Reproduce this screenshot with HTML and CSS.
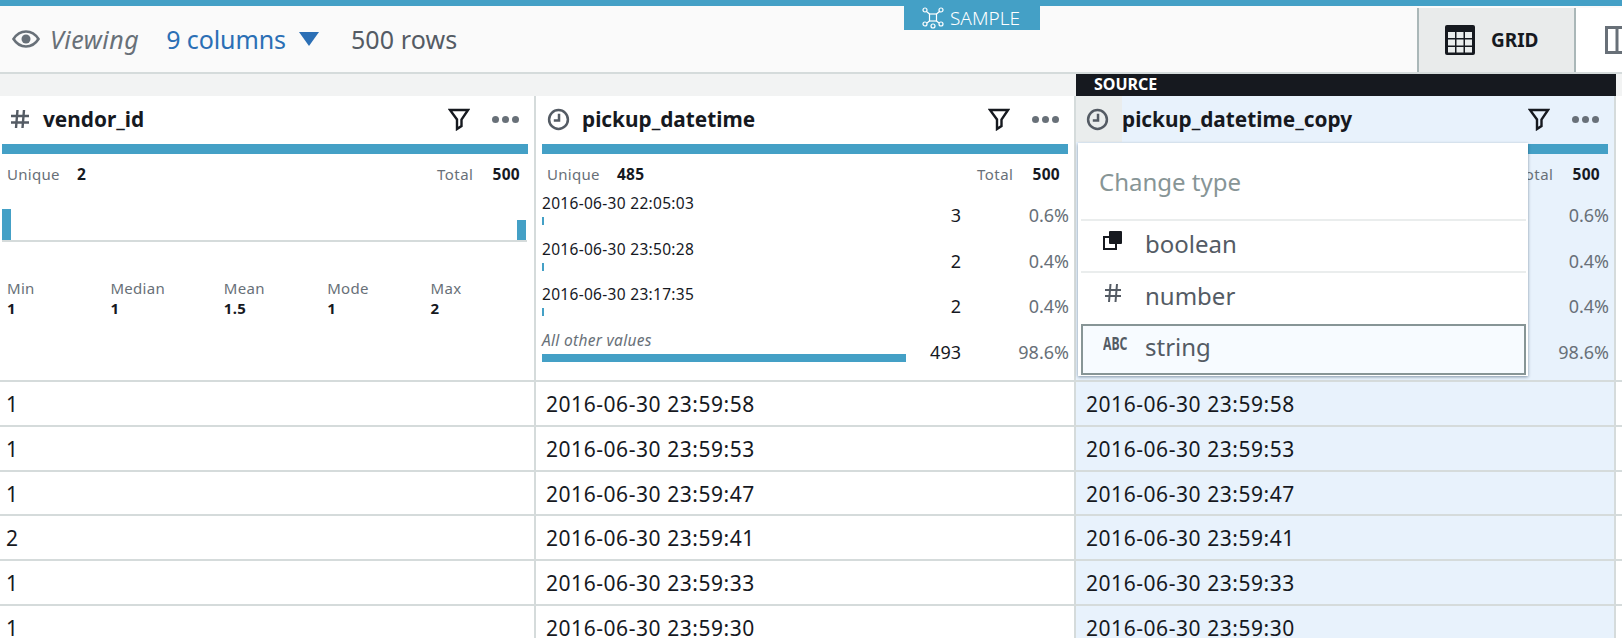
FILE: index.html
```html
<!DOCTYPE html>
<html lang="en">
<head>
    <meta charset="UTF-8">
    <meta name="viewport" content="width=device-width, initial-scale=1.0">
    <title>Data grid</title>
    <link rel="stylesheet" href="styles.css">
</head>
<body>
    <div class="topline"></div>
    <div class="toolbar">
        <svg class="eye" viewBox="0 0 28 18" width="28" height="18"><path d="M1.500 9C5 3.500 9 1.500 14 1.500S23 3.500 26.500 9C23 14.500 19 16.500 14 16.500S5 14.500 1.500 9Z" fill="none" stroke="#687078" stroke-width="2.600"/><circle cx="14" cy="9" r="4.500" fill="#687078"/></svg>
        <span class="viewing">Viewing</span>
        <span class="columns">9 columns</span>
        <span class="caret"></span>
        <span class="rows">500 rows</span>
        <div class="sample">
            <svg viewBox="0 0 22 22" width="22" height="22" fill="none" stroke="#fff" stroke-width="1.200"><rect x="7.500" y="7" width="7" height="7"/><circle cx="3" cy="3" r="2"/><circle cx="19" cy="3" r="2"/><circle cx="3" cy="17" r="2"/><circle cx="19" cy="17" r="2"/><circle cx="11" cy="19" r="2"/><path d="M4.500 4.500L7.500 7M17.500 4.500L14.500 7M5 16L7.500 14M17 16L14.500 14"/></svg>
            <span>SAMPLE</span>
        </div>
        <div class="view-btn active">
            <svg viewBox="0 0 32 32" width="32" height="32"><rect x="1" y="1" width="30" height="30" rx="2" fill="#16191f"/><g fill="#eaeded"><rect x="4" y="8" width="7" height="6"/><rect x="12.500" y="8" width="7" height="6"/><rect x="21" y="8" width="7" height="6"/><rect x="4" y="15.500" width="7" height="6"/><rect x="12.500" y="15.500" width="7" height="6"/><rect x="21" y="15.500" width="7" height="6"/><rect x="4" y="23" width="7" height="5.500"/><rect x="12.500" y="23" width="7" height="5.500"/><rect x="21" y="23" width="7" height="5.500"/></g></svg>
            <span>GRID</span>
        </div>
        <div class="view-btn split">
            <svg viewBox="0 0 32 28" width="32" height="28" fill="none" stroke="#687078" stroke-width="3"><rect x="1.500" y="1.500" width="29" height="25"/><path d="M12 1.500V26.500"/></svg>
        </div>
    </div>

    <div class="row strip">
        <div></div>
        <div></div>
        <div class="source">SOURCE</div>
    </div>

    <div class="row head">
        <div class="col">
            <div class="col-title">
                <svg class="hash" viewBox="0 0 18 18" width="18" height="18" fill="none" stroke="#545b64" stroke-width="2.400"><path d="M6.500 0L5 18M13 0L11.500 18M0 6H18M0 12.500H18"/></svg>
                <span class="col-name">vendor_id</span>
                <svg class="filter" viewBox="0 0 22 24" width="22" height="24"><path d="M2 3H20L13.500 12.500V19L9 22V12.500Z" fill="none" stroke="#16191f" stroke-width="2.400" stroke-linejoin="miter"/></svg>
                <span class="dots"><i></i><i></i><i></i></span>
            </div>
            <div class="col-bar"></div>
            <div class="totals"><span>Unique</span><b>2</b><span class="push">Total</span><b>500</b></div>
            <div class="histogram"><i class="tall"></i><i class="short"></i></div>
            <div class="summary">
                <div><span>Min</span><b>1</b></div>
                <div><span>Median</span><b>1</b></div>
                <div><span>Mean</span><b>1.5</b></div>
                <div><span>Mode</span><b>1</b></div>
                <div><span>Max</span><b>2</b></div>
            </div>
        </div>

        <div class="col">
            <div class="col-title">
                <svg class="clock" viewBox="0 0 22 22" width="23" height="23"><circle cx="11" cy="11" r="9" fill="none" stroke="#545b64" stroke-width="2.400"/><path d="M11.500 5.500V12H6.500" fill="none" stroke="#545b64" stroke-width="2.400"/></svg>
                <span class="col-name">pickup_datetime</span>
                <svg class="filter" viewBox="0 0 22 24" width="22" height="24"><path d="M2 3H20L13.500 12.500V19L9 22V12.500Z" fill="none" stroke="#16191f" stroke-width="2.400"/></svg>
                <span class="dots"><i></i><i></i><i></i></span>
            </div>
            <div class="col-bar"></div>
            <div class="totals"><span>Unique</span><b>485</b><span class="push">Total</span><b>500</b></div>
            <div class="values">
                <div class="value"><div class="value-main"><span>2016-06-30 22:05:03</span><i class="mini"></i></div><span class="count">3</span><span class="pct">0.6%</span></div>
                <div class="value"><div class="value-main"><span>2016-06-30 23:50:28</span><i class="mini"></i></div><span class="count">2</span><span class="pct">0.4%</span></div>
                <div class="value"><div class="value-main"><span>2016-06-30 23:17:35</span><i class="mini"></i></div><span class="count">2</span><span class="pct">0.4%</span></div>
                <div class="value"><div class="value-main"><em>All other values</em><i class="full"></i></div><span class="count">493</span><span class="pct">98.6%</span></div>
            </div>
        </div>

        <div class="col selected">
            <div class="col-title">
                <span class="clock-box"><svg class="clock" viewBox="0 0 22 22" width="23" height="23"><circle cx="11" cy="11" r="9" fill="none" stroke="#545b64" stroke-width="2.400"/><path d="M11.500 5.500V12H6.500" fill="none" stroke="#545b64" stroke-width="2.400"/></svg></span>
                <span class="col-name">pickup_datetime_copy</span>
                <svg class="filter" viewBox="0 0 22 24" width="22" height="24"><path d="M2 3H20L13.500 12.500V19L9 22V12.500Z" fill="none" stroke="#16191f" stroke-width="2.400"/></svg>
                <span class="dots"><i></i><i></i><i></i></span>
            </div>
            <div class="col-bar"></div>
            <div class="totals"><span class="push">Total</span><b>500</b></div>
            <div class="values">
                <div class="value"><div class="value-main"></div><span class="count"></span><span class="pct">0.6%</span></div>
                <div class="value"><div class="value-main"></div><span class="count"></span><span class="pct">0.4%</span></div>
                <div class="value"><div class="value-main"></div><span class="count"></span><span class="pct">0.4%</span></div>
                <div class="value"><div class="value-main"></div><span class="count"></span><span class="pct">98.6%</span></div>
            </div>
            <div class="type-menu">
                <div class="menu-title">Change type</div>
                <div class="menu-item">
                    <svg viewBox="0 0 20 20" width="20" height="20"><rect x="1" y="7" width="12" height="12" fill="none" stroke="#16191f" stroke-width="2"/><rect x="6" y="1" width="13" height="13" rx="1" fill="#16191f"/></svg>
                    <span>boolean</span>
                </div>
                <div class="menu-item no-line">
                    <svg viewBox="0 0 20 20" width="20" height="20" fill="none" stroke="#545b64" stroke-width="2"><path d="M7.500 1L6 19M14 1L12.500 19M2 7H18M2 13H18"/></svg>
                    <span>number</span>
                </div>
                <div class="menu-item current">
                    <span class="abc">ABC</span>
                    <span>string</span>
                </div>
            </div>
        </div>
    </div>

    <div class="row data"><div>1</div><div>2016-06-30 23:59:58</div><div class="selected">2016-06-30 23:59:58</div></div>
    <div class="row data"><div>1</div><div>2016-06-30 23:59:53</div><div class="selected">2016-06-30 23:59:53</div></div>
    <div class="row data"><div>1</div><div>2016-06-30 23:59:47</div><div class="selected">2016-06-30 23:59:47</div></div>
    <div class="row data"><div>2</div><div>2016-06-30 23:59:41</div><div class="selected">2016-06-30 23:59:41</div></div>
    <div class="row data"><div>1</div><div>2016-06-30 23:59:33</div><div class="selected">2016-06-30 23:59:33</div></div>
    <div class="row data"><div>1</div><div>2016-06-30 23:59:30</div><div class="selected">2016-06-30 23:59:30</div></div>
</body>
</html>
```

FILE: styles.css
```css
html, body {
    height: 100%;
}
body {
    font-family: "Noto Sans", Arial, sans-serif;
    color: #16191f;
    background-color: #fff;
    margin: 0;
    padding: 0;
    overflow: hidden;
}
.topline {
    height: 6px;
    background-color: #44a0c6;
}
.toolbar {
    position: relative;
    display: flex;
    align-items: center;
    height: 66px;
    padding-left: 12px;
    background-color: #fafafa;
    border-bottom: 2px solid #d5dbdb;
    font-size: 25px;
    line-height: 62px;
    color: #545b64;
}
.viewing {
    font-style: italic;
    margin-left: 10px;
    letter-spacing: 0.5px;
    color: #687078;
}
.columns {
    margin-left: 27px;
    letter-spacing: -0.100px;
    color: #2b6fb5;
}
.caret {
    width: 0;
    height: 0;
    margin: 0 0 0 13px;
    border-left: 10px solid transparent;
    border-right: 10px solid transparent;
    border-top: 14px solid #2b6fb5;
}
.rows {
    margin-left: 32px;
    letter-spacing: 0.100px;
}
.sample {
    position: absolute;
    left: 904px;
    top: 0;
    width: 136px;
    height: 24px;
    display: flex;
    align-items: center;
    gap: 6px;
    padding-left: 18px;
    box-sizing: border-box;
    background-color: #44a0c6;
    color: #fff;
    font-size: 19px;
    font-weight: 300;
    line-height: 24px;
}
.view-btn {
    display: flex;
    align-items: center;
    align-self: flex-end;
    gap: 15px;
    height: 64px;
    box-sizing: border-box;
    font-size: 19px;
    font-weight: bold;
    color: #16191f;
}
.view-btn.active {
    width: 159px;
    margin-left: auto;
    padding-left: 25px;
    background-color: #e9ebeb;
    border-left: 2px solid #aab7b8;
    border-right: 2px solid #aab7b8;
}
.view-btn svg {
    flex: none;
}
.view-btn.split {
    width: 46px;
    padding-left: 29px;
    background-color: #fff;
}

.row {
    display: grid;
    grid-template-columns: repeat(3, 540px);
    margin-left: -4px;
    width: 1626px;
    border-bottom: 2px solid #d5dbdb;
}
.strip {
    height: 22px;
    background-color: #f2f3f3;
    border-bottom: 0;
}
.source {
    background-color: #16191f;
    color: #fff;
    font-size: 16px;
    font-weight: bold;
    line-height: 20px;
    padding-left: 18px;
}
.col {
    position: relative;
    box-sizing: border-box;
    height: 284px;
    padding-left: 6px;
    border-right: 2px solid #d5dbdb;
}
.col.selected, .data .selected {
    background-color: #e8f2fc;
}
.col-title {
    display: flex;
    align-items: center;
    height: 46px;
    font-size: 20.800px;
    font-weight: bold;
}
.hash {
    flex: none;
    margin: 0 14px 0 9px;
}
.clock {
    margin: 0 12px 0 5px;
    flex: none;
}
.clock-box {
    display: flex;
    align-items: center;
    align-self: stretch;
    margin-left: -6px;
    padding-left: 6px;
    width: 40px;
    flex: none;
    background-color: #eaeded;
}
.clock-box .clock {
    margin: 0 0 0 4px;
}
.filter {
    margin-left: auto;
    flex: none;
}
.dots {
    display: flex;
    gap: 3px;
    margin: 0 15px 0 22px;
}
.dots i {
    width: 7px;
    height: 7px;
    border-radius: 50%;
    background-color: #687078;
}
.col-bar {
    height: 10px;
    margin: 2px 6px 0 0;
    background-color: #44a0c6;
}
.totals {
    display: flex;
    align-items: center;
    box-sizing: border-box;
    height: 32px;
    padding: 8px 14px 0 5px;
    font-size: 15px;
    letter-spacing: 0.3px;
    color: #687078;
}
.totals b {
    color: #16191f;
    font-size: 15.500px;
    margin-left: 17px;
}
.totals .push {
    margin-left: auto;
    margin-right: 2px;
    letter-spacing: 0.500px;
}
.histogram {
    display: flex;
    align-items: flex-end;
    justify-content: space-between;
    height: 31px;
    margin: 23px 7px 0 0;
    padding-right: 1px;
    border-bottom: 2px solid #d5dbdb;
}
.histogram i {
    width: 9px;
    background-color: #44a0c6;
}
.histogram .tall {
    height: 31px;
}
.histogram .short {
    height: 20px;
}
.summary {
    display: flex;
    margin: 36px 0 0 5px;
    font-size: 15px;
    letter-spacing: 0.3px;
    color: #687078;
}
.summary div {
    width: 104px;
    display: flex;
    flex-direction: column;
    line-height: 20px;
}
.summary div:nth-child(2) {
    width: 114px;
}
.summary b {
    color: #16191f;
}
.values {
    display: flex;
    flex-direction: column;
    gap: 0.500px;
    margin-top: -3px;
}
.value {
    display: flex;
    align-items: flex-end;
    height: 45px;
    margin-right: 5px;
}
.value-main {
    width: 364px;
    display: flex;
    flex-direction: column;
    font-size: 15.500px;
    letter-spacing: 0.3px;
    line-height: 20px;
    white-space: nowrap;
}
.value-main i {
    display: block;
    height: 8px;
    margin-top: 4px;
    margin-bottom: 3px;
}
.value-main .mini {
    width: 2px;
    background-color: #44a0c6;
}
.value-main .full {
    width: 364px;
    background-color: #44a0c6;
}
.value-main em {
    color: #687078;
}
.count {
    width: 55px;
    text-align: right;
    font-size: 18px;
    line-height: 24px;
    margin-bottom: 1px;
}
.pct {
    flex: 1;
    text-align: right;
    font-size: 18px;
    line-height: 24px;
    margin-bottom: 1px;
    color: #687078;
}
.type-menu {
    position: absolute;
    left: 2px;
    top: 47px;
    width: 450px;
    height: 233px;
    box-sizing: border-box;
    padding: 0 2px 0 3px;
    background-color: #fff;
    box-shadow: 0 1px 3px rgba(0, 30, 60, 0.45);
    font-size: 24px;
    color: #545b64;
}
.menu-title {
    height: 76px;
    display: flex;
    align-items: center;
    padding-left: 18px;
    color: #879596;
    border-bottom: 2px solid #eaeded;
}
.menu-item {
    display: flex;
    align-items: center;
    height: 52px;
    padding: 0 0 6px 22px;
    box-sizing: border-box;
    border-bottom: 2px solid #eaeded;
}
.menu-item.no-line {
    height: 51px;
    border-bottom: 0;
    padding-bottom: 6px;
}
.menu-item svg, .abc {
    width: 20px;
    flex: none;
    margin-right: 22px;
    margin-top: -6px;
}
.abc {
    font-size: 17px;
    font-weight: bold;
    white-space: nowrap;
    transform: scaleX(0.72);
    transform-origin: left center;
}
.menu-item.current {
    height: 51px;
    border: 2px solid #879596;
    background-color: #f7fbff;
    padding: 0 0 6px 20px;
}
.data > div {
    box-sizing: border-box;
    height: 42.750px;
    line-height: 44.500px;
    padding-left: 10px;
    font-size: 21px;
    letter-spacing: 0.550px;
    white-space: nowrap;
    border-right: 2px solid #d5dbdb;
}
```
